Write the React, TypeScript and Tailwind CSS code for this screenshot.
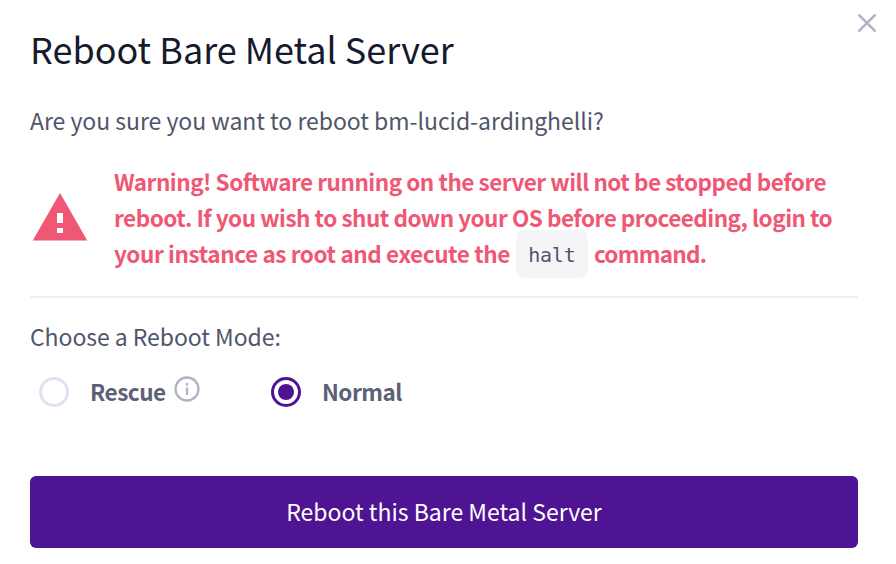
export default function App() {
  return (
    <main className="relative h-[564px] w-[896px] overflow-hidden bg-white px-[30px] font-['Noto_Sans_CJK_SC','Noto_Sans',sans-serif] text-[23px] leading-9 text-[#4f566b]">
      <button aria-label="Close" className="absolute top-[14px] right-5">
        <svg width="18" height="18" viewBox="0 0 18 18" fill="none" stroke="#b0b3c5" strokeWidth="2.6" strokeLinecap="round">
          <path d="M1.3 1.3 16.7 16.7M16.7 1.3 1.3 16.7" />
        </svg>
      </button>
      <h1 className="pt-[23px] text-[36px] leading-[50px] whitespace-nowrap text-[#151a2d]">Reboot Bare Metal Server</h1>
      <p className="mt-[29px] tracking-[-0.03px] whitespace-nowrap">Are you sure you want to reboot bm-lucid-ardinghelli?</p>
      <section className="mt-[26px] flex h-[108px] items-center">
        <svg className="mt-[-2px] ml-[2px] shrink-0" width="56" height="48" viewBox="0 0 56 48" aria-label="Warning">
          <path fill="#ef5774" fillRule="evenodd" d="M28 0 55.3 47.5H.7ZM25 20v10h6V20Zm0 15v5h6v-5Z" />
        </svg>
        <div className="mt-[-3px] ml-[26px] text-[22.5px] leading-9 font-bold whitespace-nowrap text-[#ef5774]">
          <p className="tracking-[-0.48px]">Warning! Software running on the server will not be stopped before</p>
          <p className="tracking-[-0.49px]">reboot. If you wish to shut down your OS before proceeding, login to</p>
          <p className="flex h-9 items-center tracking-[-0.4px]">
            your instance as root and execute the
            <code className="mt-[3px] mr-[6px] ml-[6px] flex h-12 w-[72px] shrink-0 items-center justify-center rounded-lg bg-[#f5f5f8] pt-[2px] font-['DejaVu_Sans_Mono',monospace] text-[20px] font-normal tracking-[-0.2px] text-[#4f566b]">halt</code>
            <span className="tracking-[-0.7px]">command.</span>
          </p>
        </div>
      </section>
      <hr className="mt-6 h-[2px] w-[828px] border-0 bg-[#eff0ff]" />
      <p className="mt-[20px] tracking-[-0.05px]">Choose a Reboot Mode:</p>
      <div className="mt-[20px] flex h-9 items-center text-[22.5px] font-bold tracking-[-0.5px] text-[#5b6177]">
        <label className="flex w-[232px] items-center">
          <span className="ml-[9px] size-[30px] rounded-full border-3 border-[#dfe3f0]" />
          <span className="mt-[-3px] ml-[21px] w-[76px]">Rescue</span>
          <svg className="mt-[-6px] ml-2" width="26" height="26" viewBox="0 0 26 26" fill="none" stroke="#b0b3c5" strokeWidth="2.3">
            <circle cx="13" cy="13" r="11.5" />
            <path d="M13 11.5V19M13 7v2.5" />
          </svg>
        </label>
        <label className="flex items-center">
          <span className="ml-[9px] flex size-[30px] items-center justify-center rounded-full border-3 border-[#4f1494]">
            <span className="size-4 rounded-full bg-[#4f1494]" />
          </span>
          <span className="mt-[-3px] ml-[21px]">Normal</span>
        </label>
      </div>
      <button className="mt-[66px] h-[72px] w-[828px] rounded-md bg-[#4f1494] pb-[3px] text-white">Reboot this Bare Metal Server</button>
    </main>
  );
}
